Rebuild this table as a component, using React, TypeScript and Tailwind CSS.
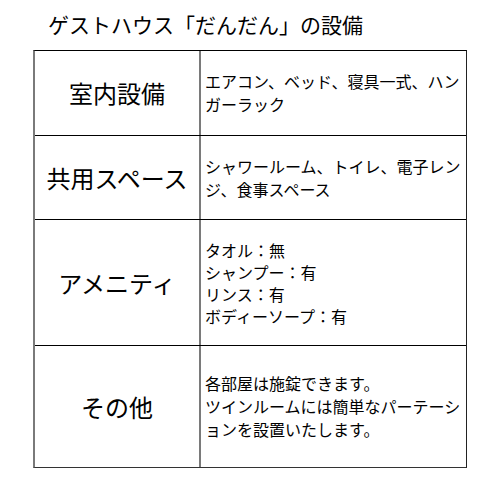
const rows: { label: string; lines: string[]; h: string; lh: string }[] = [
  { label: "室内設備", lines: ["エアコン、ベッド、寝具一式、ハン", "ガーラック"], h: "h-[84px]", lh: "leading-[23px]" },
  { label: "共用スペース", lines: ["シャワールーム、トイレ、電子レン", "ジ、食事スペース"], h: "h-[84px]", lh: "leading-[23px]" },
  {
    label: "アメニティ",
    lines: ["タオル：無", "シャンプー：有", "リンス：有", "ボディーソープ：有"],
    h: "h-[126px]",
    lh: "leading-[22px]",
  },
  {
    label: "その他",
    lines: ["各部屋は施錠できます。", "ツインルームには簡単なパーテーシ", "ョンを設置いたします。"],
    h: "h-[122px]",
    lh: "leading-[23px]",
  },
];

export default function App() {
  return (
    <div className="w-[500px] h-[500px] bg-white text-black font-['Noto_Sans_CJK_JP','Noto_Sans',sans-serif]">
      <div className="pt-[9px] pl-[48px] text-[21px] leading-[30px]">ゲストハウス「だんだん」の設備</div>

      <div className="mt-[11px] ml-[33px] w-[434px] border-t border-black border-l-2 border-l-[#7a7a7a] border-r border-r-[#222] border-b border-b-[#333]">
        {rows.map((row, i) => (
          <div
            key={row.label}
            className={`grid grid-cols-[166px_1fr] ${row.h} ${i > 0 ? "border-t border-black" : ""}`}
          >
            <div className="flex items-center justify-center border-r-2 border-[#7a7a7a] text-[24px]">
              {row.label}
            </div>
            <div className={`flex flex-col justify-center pl-[4px] text-[16px] ${row.lh}`}>
              {row.lines.map((line) => (
                <div key={line} className="whitespace-nowrap">
                  {line}
                </div>
              ))}
            </div>
          </div>
        ))}
      </div>
    </div>
  );
}
